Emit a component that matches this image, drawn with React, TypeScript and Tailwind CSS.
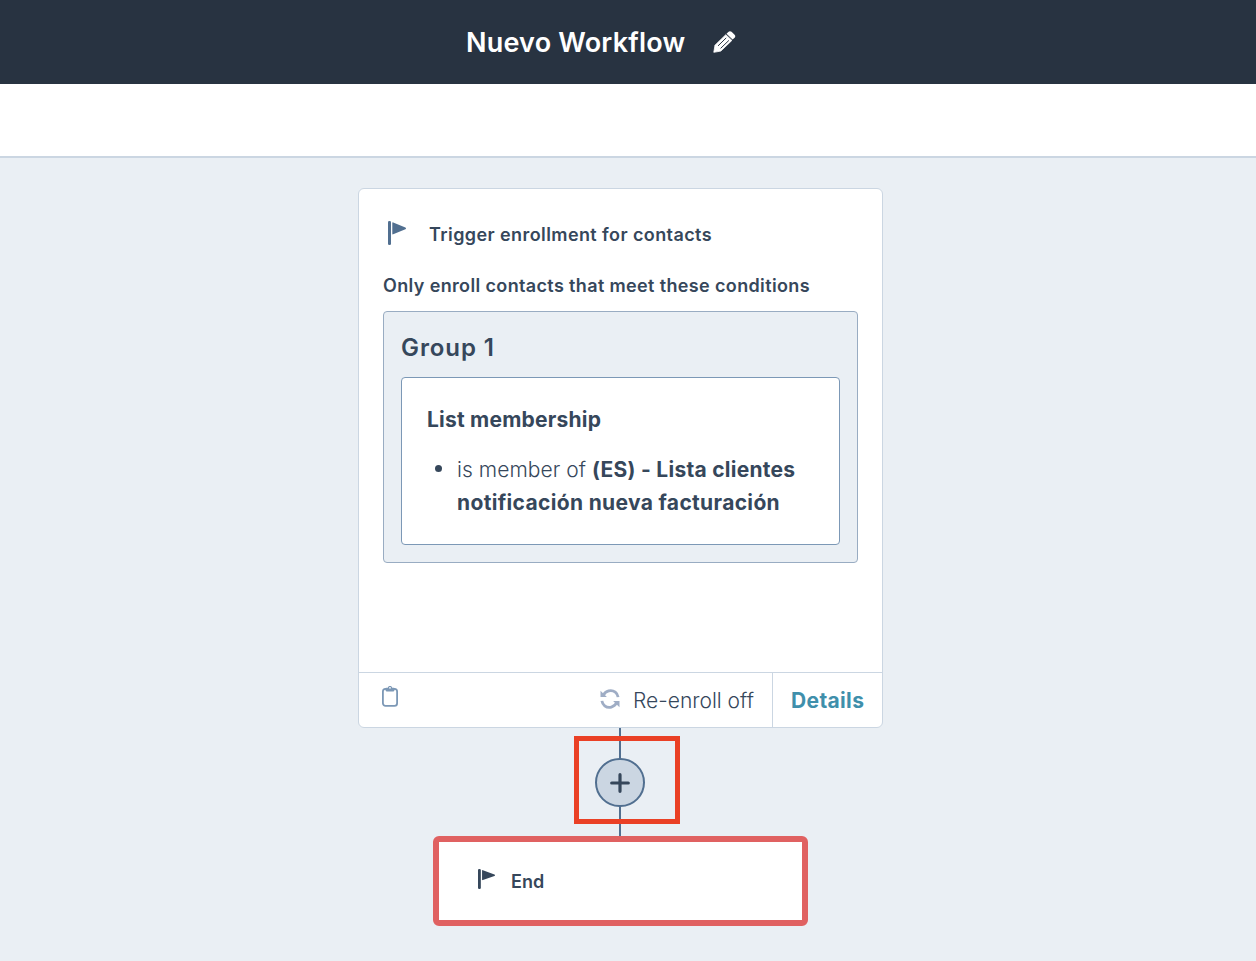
import React from "react";

function Flag({ className }: { className: string }) {
  return (
    <svg className={className} viewBox="0 0 18 24" fill="currentColor" preserveAspectRatio="none">
      <rect x="0" y="0" width="3" height="24" rx="1.3" />
      <path d="M4.300 2c0-.6.4-.8.9-.6l12.200 5.100c.8.4.8 1.400 0 1.800L5.200 13.300c-.5.2-.9 0-.9-.6z" />
    </svg>
  );
}

function Pencil() {
  return (
    <svg className="ml-7 h-[22px] w-[23px]" viewBox="0 0 23 22" fill="none">
      <path d="M0.800 21.300 2 14.200 12.800 3.700 18.900 9.400 7.800 20.100z" fill="#fff" stroke="#fff" strokeWidth="0.800" strokeLinejoin="round" />
      <path d="M13.500 2.700 15.300.9c1.100-1 2.300-.9 3.200-.1l3.100 3c.9.9.9 2 0 2.900l-2 1.900z" fill="#fff" />
      <path d="M5 14.900 13.200 6.900M7.600 17.400 15.900 9.400" stroke="#283341" strokeWidth="1" />
    </svg>
  );
}

function Clipboard() {
  return (
    <svg className="mb-1.5 h-[22px] w-4" viewBox="0 0 16 22" fill="none">
      <rect x="0.900" y="2.900" width="14.200" height="17" rx="2.600" stroke="#7c98b6" strokeWidth="1.800" />
      <path d="M3 2.600c.1-.6.6-.9 1.400-.9h1.400C6 .7 6.800 0 8 0s2 .7 2.200 1.700h1.400c.8 0 1.300.3 1.400.9l-.6 2c-.2.600-.6.900-1.200.9H4.800c-.6 0-1-.3-1.200-.9z" fill="#7c98b6" />
      <circle cx="8" cy="1.800" r="0.900" fill="#fff" />
    </svg>
  );
}

function Refresh() {
  return (
    <svg className="mb-0.5 mr-[13px] h-5 w-5" viewBox="0 0 20 20" fill="none">
      <path d="M3.300 6.300C5.600 1.800 11.300.2 15.300 3.200c1.600 1.200 2.500 2.900 2.800 4.900M16.700 13.700C14.400 18.200 8.700 19.800 4.700 16.800c-1.600-1.200-2.500-2.900-2.800-4.900" stroke="#9fadc5" strokeWidth="2.800" />
      <path d="M.5 1.700v6.200h6.400zM19.500 18.300v-6.200h-6.400z" fill="#9fadc5" />
    </svg>
  );
}

export default function App() {
  return (
    <div className="flex h-[961px] w-full flex-col overflow-hidden whitespace-nowrap bg-[#eaeff4] font-['Inter',sans-serif] text-[#36475b]">
      <header className="flex h-[84px] shrink-0 items-center bg-[#283341] pl-[466px] text-white">
        <h1 className="w-[219px] pt-0.5 text-[27px] font-semibold leading-[34px] tracking-[0.2px]">Nuevo Workflow</h1>
        <Pencil />
      </header>
      <div className="h-[74px] shrink-0 border-b-2 border-[#cbd6e2] bg-white" />

      <main className="flex flex-col items-center pr-[15px] pt-[30px]">
        <section className="flex h-[540px] w-[525px] flex-col rounded-md border border-[#cbd6e2] bg-white">
          <div className="flex grow flex-col px-6 pt-[33px]">
            <div className="flex h-6 items-center pl-[5px]">
              <Flag className="mb-0.5 h-6 w-[18px] text-[#516f90]" />
              <h2 className="ml-[23px] pt-0.5 text-[18px] font-semibold leading-6 tracking-[0.41px]">Trigger enrollment for contacts</h2>
            </div>
            <p className="mt-7 text-[18px] font-semibold leading-6 tracking-[0.36px]">Only enroll contacts that meet these conditions</p>
            <div className="mt-[13px] h-[252px] rounded border border-[#99acc2] bg-[#eaeff4] px-[17px] pt-5">
              <h3 className="text-[24px] font-semibold leading-8 tracking-[0.9px]">Group 1</h3>
              <div className="mt-[13px] h-[168px] rounded border border-[#7c98b6] bg-white pl-[25px] pt-[26px]">
                <h4 className="text-[21px] font-bold leading-8 tracking-[0.22px]">List membership</h4>
                <div className="mt-[17px] flex text-[21px] leading-[33px]">
                  <span className="ml-2 mt-3 size-[7px] rounded-full bg-[#36475b]" />
                  <div className="ml-[15px]">
                    <div className="flex">
                      <span className="w-[135px] font-light tracking-[0.05px]">is member of</span>
                      <b className="font-bold tracking-[0.26px]">(ES) - Lista clientes</b>
                    </div>
                    <b className="block font-bold tracking-[0.34px]">notificación nueva facturación</b>
                  </div>
                </div>
              </div>
            </div>
          </div>
          <footer className="flex h-[55px] items-stretch border-t border-[#cbd6e2] text-[21px]">
            <div className="flex grow items-center pl-[23px]"><Clipboard /></div>
            <div className="flex items-center">
              <Refresh />
              <span className="w-[139px] pt-0.5 font-light">Re-enroll off</span>
            </div>
            <div className="w-[110px] border-l border-[#cbd6e2] pl-[18px] pt-3 font-bold leading-8 tracking-[0.35px] text-[#3f8fab]">Details</div>
          </footer>
        </section>

        <div className="relative h-[108px] w-[525px] pl-[261px]">
          <div className="h-full w-0.5 bg-[#516f90]" />
          <div className="absolute left-[237px] top-[29.5px] flex h-[49px] w-[50px] items-center justify-center rounded-full border-2 border-[#516f90] bg-[#cbd6e2]">
            <svg className="mt-0.5 h-5 w-5" viewBox="0 0 20 20" stroke="#36475b" strokeWidth="3.200" strokeLinecap="round">
              <path d="M1.700 10h16.600M10 1.700v16.600" />
            </svg>
          </div>
          <div className="absolute left-[216px] top-2 h-[88px] w-[106px] border-5 border-[#ea4025]" />
        </div>

        <section className="flex h-[90px] w-[375px] items-center rounded-md border-6 border-[#e06161] bg-white pl-[39px]">
          <Flag className="mb-1 h-5 w-[17px]" />
          <span className="ml-4 pt-px text-[18px] font-semibold leading-6">End</span>
        </section>
      </main>
    </div>
  );
}
